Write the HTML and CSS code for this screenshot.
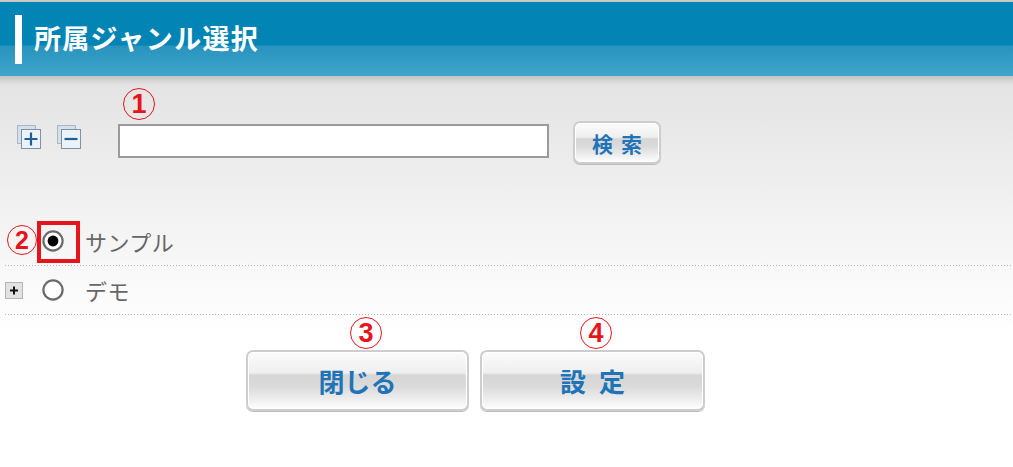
FILE: index.html
```html
<!DOCTYPE html>
<html lang="ja">
<head>
    <meta charset="UTF-8">
    <meta name="viewport" content="width=device-width, initial-scale=1.0">
    <title>所属ジャンル選択</title>
    <link rel="stylesheet" href="styles.css">
</head>
<body>

<div class="header">
    <span class="header-bar"></span>
    <h1 class="header-title">所属ジャンル選択</h1>
</div>

<div class="main">
    <div class="search-row">
        <!-- expand all -->
        <svg class="tool-icon" width="24" height="24" viewBox="0 0 24 24">
            <rect x="0.5" y="0.5" width="18" height="18" fill="#d3e0eb" stroke="#a9b7c6"/>
            <rect x="4.5" y="4.5" width="19" height="19" fill="#eaf3fa" stroke="#8191a3"/>
            <path d="M14 7.5v13M7.5 14h13" stroke="#1f5e8e" stroke-width="2.2"/>
        </svg>
        <!-- collapse all -->
        <svg class="tool-icon tool-icon-second" width="24" height="24" viewBox="0 0 24 24">
            <rect x="0.5" y="0.5" width="18" height="18" fill="#d3e0eb" stroke="#a9b7c6"/>
            <rect x="4.5" y="4.5" width="19" height="19" fill="#eaf3fa" stroke="#8191a3"/>
            <path d="M7.5 14h13" stroke="#1f5e8e" stroke-width="2.2"/>
        </svg>
        <div class="search-field">
            <span class="mark mark-search">1</span>
            <input type="text" class="search-input">
        </div>
        <button class="btn btn-small">検索</button>
    </div>

    <div class="tree">
        <div class="tree-row">
            <span class="mark mark-radio">2</span>
            <span class="highlight"></span>
            <span class="expander"></span>
            <svg class="radio" width="22" height="22" viewBox="0 0 22 22">
                <circle cx="11" cy="11" r="9.6" fill="#fff" stroke="#6a6a6a" stroke-width="2.2"/>
                <circle cx="11" cy="11" r="5.4" fill="#000"/>
            </svg>
            <span class="tree-label">サンプル</span>
        </div>
        <div class="tree-row tree-row-second">
            <svg class="expander" width="18" height="17" viewBox="0 0 18 17">
                <rect x="0.5" y="0.5" width="17" height="16" fill="#e2e2e2" stroke="#b4b4b4"/>
                <path d="M9 4.5v8M5 8.5h8" stroke="#111" stroke-width="2"/>
            </svg>
            <svg class="radio" width="22" height="22" viewBox="0 0 22 22">
                <circle cx="11" cy="11" r="9.6" fill="#fff" stroke="#6a6a6a" stroke-width="2.2"/>
            </svg>
            <span class="tree-label">デモ</span>
        </div>
    </div>

    <div class="actions">
        <div class="action">
            <span class="mark mark-close">3</span>
            <button class="btn btn-large btn-close">閉じる</button>
        </div>
        <div class="action">
            <span class="mark mark-set">4</span>
            <button class="btn btn-large btn-set">設定</button>
        </div>
    </div>
</div>

</body>
</html>
```

FILE: styles.css
```css
body {
    margin: 0;
    font-family: "Noto Sans CJK JP", "Noto Sans", sans-serif;
    background-color: #fff;
}
.header {
    border-top: 2px solid #c9c9c9;
    height: 74px;
    background: linear-gradient(#0285b5 0, #0285b5 43px, #2893be 44px, #40a6c8 74px);
    display: flex;
    align-items: center;
}
.header-bar {
    width: 7px;
    height: 49px;
    background-color: #fff;
    margin-left: 15px;
    margin-right: 12px;
}
.header-title {
    margin: 0;
    color: #fff;
    font-size: 27px;
    letter-spacing: 1.3px;
    font-weight: bold;
    line-height: 1;
    margin-bottom: 3px;
}
.main {
    background:
        linear-gradient(rgba(0, 0, 0, 0.14), rgba(0, 0, 0, 0) 9px),
        linear-gradient(#e3e3e3, #fff 255px);
    height: 391px;
}
.search-row {
    display: flex;
    align-items: flex-start;
    padding-top: 45px;
    padding-left: 17px;
}
.tool-icon {
    margin-top: 4px;
}
.tool-icon-second {
    margin-left: 16px;
}
.search-field {
    position: relative;
    margin-left: 37px;
    margin-top: 3px;
}
.search-input {
    display: block;
    box-sizing: border-box;
    width: 431px;
    height: 34px;
    border: 2px solid #9a9a9a;
    background: #fff;
    margin: 0;
}
.mark {
    position: absolute;
    box-sizing: border-box;
    width: 32px;
    height: 32px;
    border: 1px solid #e8141c;
    border-radius: 50%;
    color: #e8141c;
    font-family: "Liberation Sans", sans-serif;
    font-weight: bold;
    font-size: 27px;
    line-height: 30px;
    text-align: center;
}
.mark-search {
    left: 5px;
    top: -36px;
}
.btn {
    box-sizing: border-box;
    border: 2px solid #cdcdcd;
    border-radius: 7px;
    background: linear-gradient(#fbfbfb 0%, #efefef 36%, #d6d6d6 41%, #dadada 60%, #f6f6f6 92%, #fff 100%);
    box-shadow: inset 0 0 0 1px #fff, 0 1px 0 #bdbdbd;
    color: #1f73b7;
    font-family: "Noto Sans CJK JP", sans-serif;
    font-weight: bold;
    padding: 0;
    cursor: pointer;
}
.btn-small {
    margin-left: 24px;
    width: 88px;
    height: 43px;
    font-size: 21px;
    letter-spacing: 8px;
    text-indent: 8px;
}
.tree {
    margin-left: 5px;
    margin-top: 52px;
}
.tree-row {
    position: relative;
    display: flex;
    align-items: center;
    height: 49px;
    background: linear-gradient(to right, #b8b8b8 1px, transparent 1px) repeat-x left bottom / 3px 1px;
    padding-bottom: 1px;
}
.tree-row-second {
    height: 48px;
}
.expander {
    width: 18px;
    height: 17px;
}
.radio {
    margin-left: 19px;
}
.tree-label {
    margin-left: 21px;
    font-size: 22px;
    letter-spacing: 0.5px;
    color: #666;
    line-height: 1;
}
.highlight {
    position: absolute;
    left: 32px;
    top: 5px;
    width: 43px;
    height: 42px;
    box-sizing: border-box;
    border: 4px solid #e8141c;
}
.mark-radio {
    left: 2px;
    top: 9px;
    width: 30px;
    height: 30px;
    line-height: 28px;
    font-size: 25px;
}
.actions {
    display: flex;
    gap: 11px;
    padding-left: 246px;
    margin-top: 35px;
}
.action {
    position: relative;
}
.btn-large {
    display: block;
    height: 61px;
    font-size: 26px;
}
.btn-close {
    width: 223px;
}
.btn-set {
    width: 225px;
    letter-spacing: 13px;
    text-indent: 13px;
}
.mark-close {
    left: 104px;
    top: -33px;
}
.mark-set {
    left: 100px;
    top: -33px;
}
```
